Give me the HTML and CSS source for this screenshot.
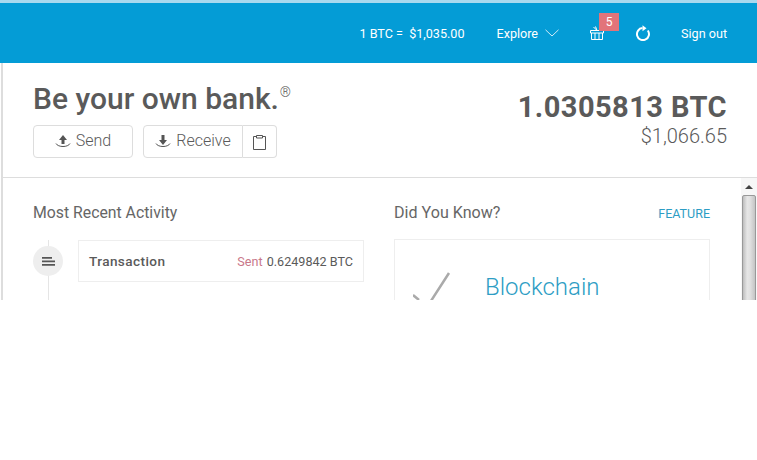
FILE: index.html
```html
<!DOCTYPE html>
<html lang="en">
<head>
    <meta charset="UTF-8">
    <meta name="viewport" content="width=device-width, initial-scale=1.0">
    <title>My Wallet</title>
    <link rel="stylesheet" href="styles.css">
</head>
<body>
    <div class="app">
        <header>
            <span class="rate">1 BTC = &nbsp;$1,035.00</span>
            <a class="explore" href="#">Explore
                <svg width="14" height="8" viewBox="0 0 14 8"><path d="M.5.8 7 7 13.500.8" fill="none" stroke="#cfeaf6" stroke-width="1"/></svg>
            </a>
            <div class="gift">
                <svg width="14" height="14" viewBox="0 0 14 14" fill="none" stroke="#fff" stroke-width="1"><path d="M.5 4.500h13v2.500H.5zM1.500 7v6.500h11V7M5 7v6.500M9 7v6.500M7 4.500 3.500 1M7 4.500 5.500.5"/></svg>
                <span class="badge">5</span>
            </div>
            <svg class="refresh" width="16" height="16" viewBox="0 0 16 16" fill="none"><path d="M12.800 5.500A6 6 0 1 1 7.500 3.100" stroke="#fff" stroke-width="2"/><path d="M7.500 .2v6l4-3z" fill="#fff"/></svg>
            <a class="signout" href="#">Sign out</a>
        </header>
        <main>
            <section class="summary">
                <div>
                    <h1>Be your own bank.<sup>®</sup></h1>
                    <div class="actions">
                        <button class="btn btn-send">
                            <svg width="16" height="14" viewBox="0 0 16 14"><path d="M8 1 12 6H9.500v4h-3V6H4z" fill="#555"/><path d="M1 9.500c2 4 12 4 14 0" fill="none" stroke="#555"/></svg>
                            Send
                        </button>
                        <div class="btn-group">
                            <button class="btn btn-receive">
                                <svg width="16" height="14" viewBox="0 0 16 14"><path d="M8 11 4 6h2.500V1h3v5H12z" fill="#555"/><path d="M1 9.500c2 4 12 4 14 0" fill="none" stroke="#555"/></svg>
                                Receive
                            </button>
                            <button class="btn btn-clip">
                                <svg width="15" height="16" viewBox="0 0 15 16" fill="none" stroke="#555"><path d="M4.500 2.500h-3v13h12v-13h-3M4.500 1.500h6v2.500h-6z"/></svg>
                            </button>
                        </div>
                    </div>
                </div>
                <div class="balance">
                    <div class="btc">1.0305813 BTC</div>
                    <div class="usd">$1,066.65</div>
                </div>
            </section>
            <div class="lower">
                <div class="columns">
                    <section class="activity">
                        <h2>Most Recent Activity</h2>
                        <div class="timeline">
                            <div class="dot">
                                <svg width="13" height="9" viewBox="0 0 13 9" fill="#555"><path d="M0 0h10v1.700H0zM0 3.500h13v1.700H0zM0 7h13v1.700H0z"/></svg>
                            </div>
                            <div class="tx">
                                <span class="tx-title">Transaction</span>
                                <span class="tx-amount"><span class="sent">Sent</span> 0.6249842 BTC</span>
                            </div>
                        </div>
                    </section>
                    <section class="know">
                        <div class="know-head">
                            <h2>Did You Know?</h2>
                            <a href="#">FEATURE</a>
                        </div>
                        <div class="card">
                            <svg class="check" width="38" height="30" viewBox="0 0 38 30" fill="none" stroke="#aaa" stroke-width="2.500"><path d="M36 1 16 32M0 23 6 28"/></svg>
                            <div class="card-title">Blockchain</div>
                        </div>
                    </section>
                </div>
                <div class="scrollbar">
                    <div class="arrow"></div>
                    <div class="thumb"></div>
                </div>
            </div>
        </main>
    </div>
</body>
</html>
```

FILE: styles.css
```css
body { margin: 0; background: #fff; font-family: Roboto, Arial, sans-serif; color: #5a5a5a; }
a { text-decoration: none; }
.app { height: 300px; overflow: hidden; display: flex; flex-direction: column; }
header { height: 60px; flex: none; border-top: 3px solid #a9d9ef; background: #049cd6; color: #fff; display: flex; align-items: center; font-size: 12.6px; padding-right: 30px; }
.rate { margin-left: auto; margin-right: 32px; }
.explore { color: #fff; display: flex; align-items: center; gap: 7px; margin-right: 31px; }
.gift { position: relative; height: 14px; margin-right: 31px; }
.gift svg { display: block; }
.badge { position: absolute; left: 9px; top: -13px; width: 20px; height: 18px; background: #e2747a; color: #fff; font-size: 12px; text-align: center; line-height: 18px; }
.refresh { margin-right: 30px; }
.signout { color: #fff; }
main { flex: 1; min-height: 0; border-left: 2px solid #ddd; margin-left: 1px; display: flex; flex-direction: column; }
.summary { height: 115px; flex: none; border-bottom: 1px solid #ddd; display: flex; justify-content: space-between; padding: 18px 30px 0 30px; box-sizing: border-box; }
h1 { margin: 0 0 8px; font-size: 30px; line-height: 36px; font-weight: 500; color: #5a5a5a; }
h1 sup { font-size: 14px; font-weight: 300; line-height: 0; vertical-align: 12px; margin-left: 1px; }
.actions { display: flex; gap: 10px; }
.btn { height: 33px; background: #fff; border: 1px solid #ddd; border-radius: 4px; color: #5a5a5a; font-family: Roboto, Arial, sans-serif; font-size: 16px; font-weight: 300; line-height: 29px; display: flex; align-items: center; justify-content: center; gap: 5px; padding: 0 0 2px; }
.btn-send { width: 100px; }
.btn-group { display: flex; }
.btn-receive { width: 100px; border-radius: 4px 0 0 4px; }
.btn-clip { width: 34px; border-left: none; border-radius: 0 4px 4px 0; padding: 0; }
.balance { text-align: right; margin-top: 10px; }
.btc { font-size: 29px; line-height: 32px; font-weight: 700; letter-spacing: .45px; }
.usd { font-size: 20px; line-height: 26px; font-weight: 300; }
.lower { flex: 1; min-height: 0; display: flex; overflow: hidden; }
.columns { flex: 1; display: flex; padding: 26px 30px 0 30px; gap: 30px; }
.activity { width: 331px; flex: none; }
h2 { margin: 0; font-size: 15.800px; line-height: 18px; font-weight: 400; color: #666; }
.timeline { display: flex; align-items: center; gap: 15px; margin-top: 18px; position: relative; }
.timeline::before { content: ""; position: absolute; left: 15px; top: 0; height: 70px; width: 1px; background: #e5e5e5; }
.dot { width: 30px; height: 30px; flex: none; border-radius: 50%; background: #eee; display: flex; align-items: center; justify-content: center; position: relative; }
.tx { flex: 1; height: 42px; border: 1px solid #eee; box-sizing: border-box; display: flex; align-items: center; justify-content: space-between; padding: 0 10px; }
.tx-title { font-size: 13.600px; font-weight: 500; letter-spacing: .4px; }
.tx-amount { font-size: 12.600px; }
.sent { color: #c9788a; margin-right: 1px; }
.know { width: 316px; flex: none; }
.know-head { display: flex; justify-content: space-between; align-items: center; }
.know-head h2 { font-size: 16.100px; }
.know-head a { color: #2d9dc4; font-size: 12.500px; }
.card { height: 120px; margin-top: 17px; border: 1px solid #eee; box-sizing: border-box; display: flex; align-items: flex-start; padding: 32px 0 0 18px; }
.check { flex: none; }
.card-title { margin-left: 34px; font-size: 24px; line-height: 30px; font-weight: 300; color: #2d9dc4; }
.scrollbar { width: 16px; flex: none; background: #f7f7f7; margin-left: auto; }
.arrow { height: 17px; display: flex; align-items: center; justify-content: center; }
.arrow::before { content: ""; border: 4px solid transparent; border-top: 0; border-bottom-color: #444; }
.thumb { height: 300px; margin: 0 1px; background: linear-gradient(to right, #bdbdbd, #e6e6e6 35%, #e0e0e0 60%, #c4c4c4); border: 1px solid #999; box-sizing: border-box; border-radius: 2px 2px 0 0; }
```
